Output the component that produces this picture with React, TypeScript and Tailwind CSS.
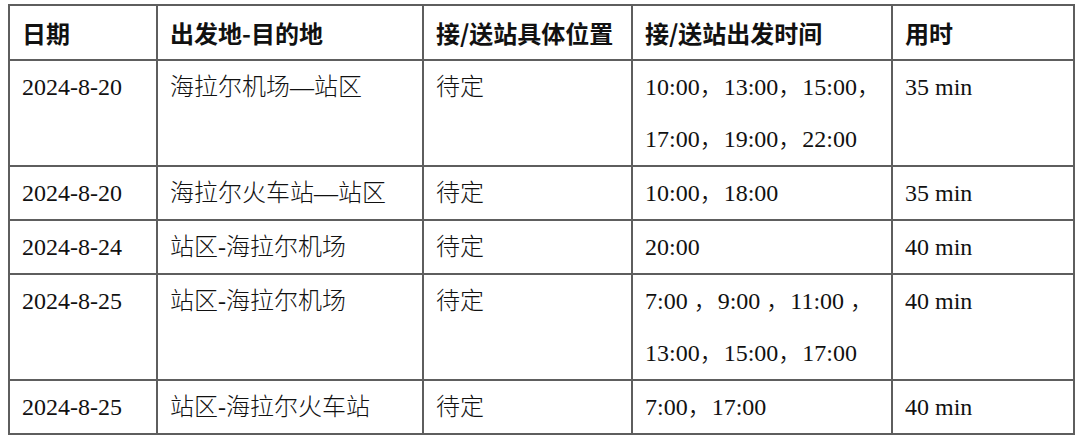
const rows: { date: string; route: string; place: string; times: string[]; dur: string }[] = [
  { date: "2024-8-20", route: "海拉尔机场—站区", place: "待定", times: ["10:00，13:00，15:00，", "17:00，19:00，22:00"], dur: "35 min" },
  { date: "2024-8-20", route: "海拉尔火车站—站区", place: "待定", times: ["10:00，18:00"], dur: "35 min" },
  { date: "2024-8-24", route: "站区-海拉尔机场", place: "待定", times: ["20:00"], dur: "40 min" },
  { date: "2024-8-25", route: "站区-海拉尔机场", place: "待定", times: ["7:00 ，9:00 ，11:00 ，", "13:00，15:00，17:00"], dur: "40 min" },
  { date: "2024-8-25", route: "站区-海拉尔火车站", place: "待定", times: ["7:00，17:00"], dur: "40 min" },
];

const heads = ["日期", "出发地-目的地", "接/送站具体位置", "接/送站出发时间", "用时"];

const cell = "border-2 border-[#5e5e5e] pl-[12px] align-top whitespace-nowrap";

export default function App() {
  return (
    <div
      className="w-[1080px] h-[444px] bg-white pt-[4px] pl-[8px] text-[#111] text-[24px]"
      style={{ fontFamily: '"Liberation Serif", "Noto Sans CJK SC", serif' }}
    >
      <table className="table-fixed border-collapse w-[1065px]">
        <colgroup>
          <col className="w-[148px]" />
          <col className="w-[266px]" />
          <col className="w-[209px]" />
          <col className="w-[260px]" />
          <col className="w-[182px]" />
        </colgroup>
        <thead>
          <tr>
            {heads.map((h) => (
              <th
                key={h}
                className={`${cell} text-left font-bold leading-[53px]`}
                style={{ fontFamily: '"Noto Sans CJK SC", "Liberation Sans", sans-serif' }}
              >
                {h}
              </th>
            ))}
          </tr>
        </thead>
        <tbody>
          {rows.map((r, i) => (
            <tr key={i} className="leading-[52px] font-light">
              <td className={cell}>{r.date}</td>
              <td className={cell}>{r.route}</td>
              <td className={cell}>{r.place}</td>
              <td className={cell}>
                {r.times.map((t) => (
                  <div key={t}>{t}</div>
                ))}
              </td>
              <td className={cell}>{r.dur}</td>
            </tr>
          ))}
        </tbody>
      </table>
    </div>
  );
}
